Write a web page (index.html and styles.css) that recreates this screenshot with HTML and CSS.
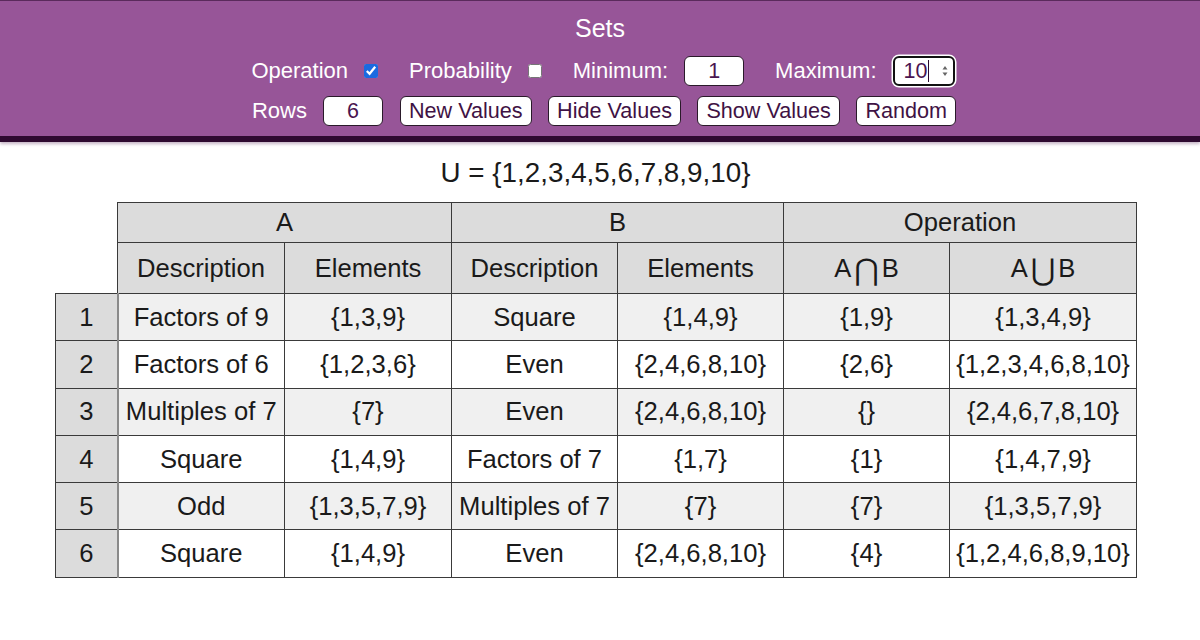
FILE: index.html
```html
<!DOCTYPE html>
<html lang="en">
<head>
<meta charset="utf-8">
<title>Sets</title>
<link rel="stylesheet" href="styles.css">
</head>
<body>
<header class="topbar">
  <div class="title">Sets</div>
  <div class="controls">
    <div class="group"><label for="op">Operation</label><input id="op" class="check" type="checkbox" checked></div>
    <div class="group"><label for="prob">Probability</label><input id="prob" class="check" type="checkbox"></div>
    <div class="group"><label for="min">Minimum:</label><input id="min" class="field" type="text" value="1"></div>
    <div class="group"><label for="max">Maximum:</label>
      <span class="field focused">
        <input id="max" class="inner" type="text" value="10">
        <span class="caret"></span>
        <svg class="spin" width="8" height="16" viewBox="0 0 8 16"><path d="M1.5 6.5 L4 3 L6.5 6.5 Z M1.5 9.5 L4 13 L6.5 9.5 Z" fill="#666"/></svg>
      </span>
    </div>
  </div>
  <div class="controls row3">
    <div class="group"><label for="rows">Rows</label><input id="rows" class="field" type="text" value="6"></div>
    <div class="buttons">
      <button class="btn">New Values</button>
      <button class="btn">Hide Values</button>
      <button class="btn">Show Values</button>
      <button class="btn">Random</button>
    </div>
  </div>
</header>

<main class="content">
  <div class="universe">U = {1,2,3,4,5,6,7,8,9,10}</div>
  <table class="sets">
    <colgroup>
      <col class="c-num"><col class="c-std"><col class="c-std"><col class="c-std2"><col class="c-std2"><col class="c-std2"><col class="c-wide">
    </colgroup>
    <thead>
      <tr class="h1">
        <th class="blank"></th>
        <th colspan="2">A</th>
        <th colspan="2">B</th>
        <th colspan="2">Operation</th>
      </tr>
      <tr class="h2">
        <th class="blank"></th>
        <th>Description</th>
        <th>Elements</th>
        <th>Description</th>
        <th>Elements</th>
        <th>A<span class="sym">⋂</span>B</th>
        <th>A<span class="sym">⋃</span>B</th>
      </tr>
    </thead>
    <tbody>
      <tr class="odd"><td class="num">1</td><td>Factors of 9</td><td>{1,3,9}</td><td>Square</td><td>{1,4,9}</td><td>{1,9}</td><td>{1,3,4,9}</td></tr>
      <tr><td class="num">2</td><td>Factors of 6</td><td>{1,2,3,6}</td><td>Even</td><td>{2,4,6,8,10}</td><td>{2,6}</td><td>{1,2,3,4,6,8,10}</td></tr>
      <tr class="odd"><td class="num">3</td><td>Multiples of 7</td><td>{7}</td><td>Even</td><td>{2,4,6,8,10}</td><td>{}</td><td>{2,4,6,7,8,10}</td></tr>
      <tr><td class="num">4</td><td>Square</td><td>{1,4,9}</td><td>Factors of 7</td><td>{1,7}</td><td>{1}</td><td>{1,4,7,9}</td></tr>
      <tr class="odd"><td class="num">5</td><td>Odd</td><td>{1,3,5,7,9}</td><td>Multiples of 7</td><td>{7}</td><td>{7}</td><td>{1,3,5,7,9}</td></tr>
      <tr><td class="num">6</td><td>Square</td><td>{1,4,9}</td><td>Even</td><td>{2,4,6,8,10}</td><td>{4}</td><td>{1,2,4,6,8,9,10}</td></tr>
    </tbody>
  </table>
</main>
</body>
</html>
```

FILE: styles.css
```css
html, body {
  margin: 0;
  padding: 0;
  background: #ffffff;
  font-family: "Liberation Sans", Arial, "DejaVu Sans", sans-serif;
}

.topbar {
  background: #975598;
  color: #ffffff;
  box-sizing: content-box;
  height: 123px;
  padding-top: 12px;
  border-top: 1px solid #5a2a5c;
  border-bottom: 6px solid #2e0a30;
  box-shadow: 0 2px 3px rgba(90, 40, 90, 0.35);
  display: flex;
  flex-direction: column;
  align-items: center;
}

.title {
  font-size: 25px;
  line-height: 30px;
  height: 30px;
  margin-bottom: 13px;
}

.controls {
  display: flex;
  align-items: center;
  gap: 31px;
  height: 30px;
  font-size: 22px;
  margin-bottom: 10px;
  padding-left: 6px;
}

.controls.row3 {
  padding-left: 8px;
}

.group {
  display: flex;
  align-items: center;
  gap: 16px;
}

.group label {
  line-height: 30px;
}

.check {
  width: 14px;
  height: 14px;
  margin: 0;
  accent-color: #1a6ae0;
}

.field {
  width: 60px;
  height: 30px;
  box-sizing: border-box;
  border: 1px solid #2a1a2a;
  border-radius: 6px;
  background: #ffffff;
  color: #4a1550;
  font-family: "Liberation Sans", Arial, sans-serif;
  font-size: 21.5px;
  text-align: center;
  padding: 0;
  margin: 0;
}

.field.focused {
  width: 62px;
  display: flex;
  align-items: center;
  border: 2px solid #111111;
  box-shadow: 0 0 0 1.5px #ffffff;
  padding: 0 4px 0 9px;
}

.inner {
  width: 24px;
  flex: none;
  border: none;
  outline: none;
  background: transparent;
  font-family: "Liberation Sans", Arial, sans-serif;
  font-size: 21.5px;
  color: #4a1550;
  text-align: left;
  padding: 0;
  margin: 0;
}

.caret {
  width: 1.5px;
  height: 22px;
  background: #2a0a30;
  flex: none;
}

.spin {
  flex: none;
  margin-left: auto;
}

.buttons {
  display: flex;
  gap: 16.5px;
  margin-left: -14px;
}

.btn {
  height: 30px;
  padding: 0 8px;
  border: 1px solid #2a1a2a;
  border-radius: 6px;
  background: #ffffff;
  color: #3f1244;
  font-family: "Liberation Sans", Arial, sans-serif;
  font-size: 21.6px;
  line-height: 28px;
  margin: 0;
}

.content {
  padding-top: 15px;
}

.universe {
  text-align: center;
  font-size: 27.8px;
  line-height: 32px;
  color: #1a1a1a;
  margin-bottom: 13px;
  padding-right: 9px;
}

.sets {
  margin-left: 55px;
  border-collapse: collapse;
  table-layout: fixed;
  width: 1081px;
  color: #1a1a1a;
}

.c-num { width: 62px; }
.c-std { width: 167px; }
.c-std2 { width: 166px; }
.c-wide { width: 187px; }

.sets th,
.sets td {
  border: 1px solid #3a3a3a;
  text-align: center;
  padding: 0;
  font-weight: normal;
  white-space: nowrap;
}

.sets th {
  background: #dcdcdc;
}

.sets th.blank {
  background: transparent;
  border: none;
}

.h1 th {
  height: 39px;
  font-size: 25.6px;
}

.h2 th {
  height: 50px;
  font-size: 25.6px;
}

.sym {
  display: inline-block;
  font-family: "DejaVu Sans", sans-serif;
  font-size: 30px;
  line-height: 20px;
  margin: 0 3px;
  position: relative;
  top: 3px;
}

.sets td {
  height: 46.3px;
  font-size: 25.6px;
  background: #ffffff;
}

.sets tr.odd td {
  background: #f0f0f0;
}

.sets tr td.num,
.sets tr.odd td.num {
  background: #dcdcdc;
  border-right: 2px solid #8a8a8a;
}
```
